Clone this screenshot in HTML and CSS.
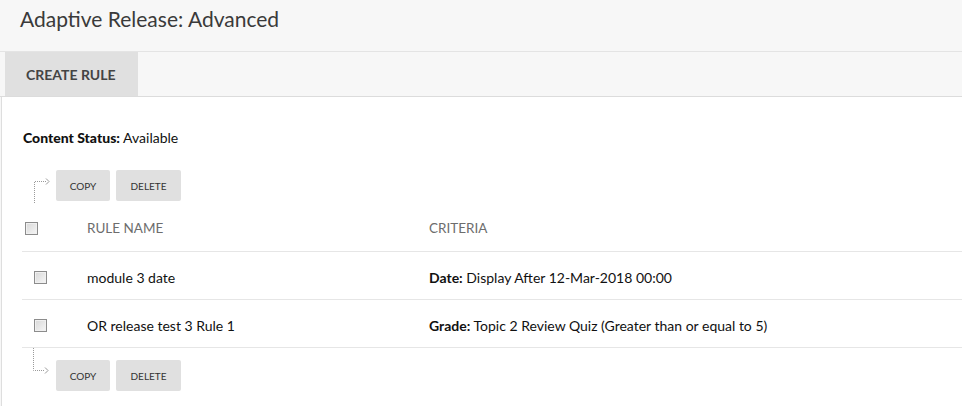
FILE: index.html
```html
<!DOCTYPE html>
<html>
<head>
<meta charset="utf-8">
<link rel="stylesheet" href="styles.css">
</head>
<body>
<header class="page-header">
  <h1 class="title">Adaptive Release: Advanced</h1>
</header>
<nav class="tabbar">
  <div class="tab">CREATE RULE</div>
</nav>
<main class="content">
  <p class="status"><b>Content Status:</b> Available</p>

  <div class="toolbar">
    <svg class="connector" width="34" height="33" viewBox="0 0 34 33">
      <path d="M12.5 33 V11.5 H24" fill="none" stroke="#9a9a9a" stroke-width="1" stroke-dasharray="1 1"/>
      <path d="M24 8.5 L27 11.5 L24 14.5" fill="none" stroke="#9a9a9a" stroke-width="1"/>
    </svg>
    <button class="btn btn-copy">COPY</button>
    <button class="btn btn-delete">DELETE</button>
  </div>

  <div class="grid">
    <div class="row head">
      <div class="cell cb-cell head-cb"><span class="cb"></span></div>
      <div class="cell">RULE NAME</div>
      <div class="cell">CRITERIA</div>
    </div>
    <div class="row">
      <div class="cell cb-cell"><span class="cb"></span></div>
      <div class="cell">module 3 date</div>
      <div class="cell"><b>Date:</b> Display After 12-Mar-2018 00:00</div>
    </div>
    <div class="row">
      <div class="cell cb-cell"><span class="cb"></span></div>
      <div class="cell">OR release test 3 Rule 1</div>
      <div class="cell"><b>Grade:</b> Topic 2 Review Quiz (Greater than or equal to 5)</div>
    </div>
  </div>

  <div class="toolbar bottom">
    <svg class="connector" width="34" height="31" viewBox="0 0 34 31">
      <path d="M11.5 0 V22.5 H23" fill="none" stroke="#9a9a9a" stroke-width="1" stroke-dasharray="1 1"/>
      <path d="M23 19.5 L26 22.5 L23 25.5" fill="none" stroke="#9a9a9a" stroke-width="1"/>
    </svg>
    <button class="btn btn-copy">COPY</button>
    <button class="btn btn-delete">DELETE</button>
  </div>
</main>
</body>
</html>
```
FILE: styles.css
```css
* { box-sizing: border-box; }
html, body { height: 100%; }
body {
  margin: 0;
  background: #f7f7f7;
  font-family: Lato, "Open Sans", sans-serif;
  color: #111;
  display: flex;
  flex-direction: column;
}
.page-header {
  height: 52px;
  border-bottom: 1px solid #e4e4e4;
  padding: 5px 0 0 20px;
}
.title {
  margin: 0;
  font-weight: 400;
  font-size: 21px;
  line-height: 28px;
  color: #3a3a3a;
}
.tabbar {
  height: 45px;
  border-bottom: 1px solid #dcdcdc;
  padding-left: 5px;
  display: flex;
}
.tab {
  width: 133px;
  height: 44px;
  background: #e0e0e0;
  font-weight: 700;
  font-size: 14px;
  color: #444;
  display: flex;
  align-items: center;
  padding-left: 21px;
  padding-top: 1px;
}
.content {
  flex: 1;
  background: #fff;
  margin-left: 1px;
  border-left: 1px solid #dedede;
  padding: 31px 0 0 20px;
  font-size: 14px;
}
.status {
  margin: 0 0 0 1px;
  line-height: 20px;
}
.status b { font-weight: 900; }
.toolbar {
  display: flex;
  margin-top: 22px;
  height: 31px;
}
.toolbar.bottom {
  margin-top: 0;
  height: 43px;
  align-items: flex-end;
}
.toolbar.bottom .connector { align-self: flex-start; }
.connector { flex: none; }
.btn {
  border: none;
  border-radius: 2px;
  background: #e0e0e0;
  font-family: inherit;
  font-size: 10px;
  color: #333;
  height: 31px;
  padding: 0;
  margin-right: 6px;
}
.btn-copy { width: 54px; }
.btn-delete { width: 65px; }
.grid { display: flex; flex-direction: column; }
.row {
  display: grid;
  grid-template-columns: 65px 342px 1fr;
  align-items: center;
  height: 48px;
  padding-top: 3px;
  border-bottom: 1px solid #e6e6e6;
}
.row.head {
  height: 51px;
  padding-top: 4px;
  color: #6d6d6d;
  font-size: 13.5px;
}
.cb-cell { display: flex; padding-left: 12px; }
.head-cb { padding-left: 3px; }
.cb {
  width: 13px;
  height: 13px;
  border: 1px solid #8c8c8c;
  background: linear-gradient(135deg, #d8d8d8, #f6f6f6);
  box-shadow: inset 0 0 0 1px #f0f0f0;
}
```
